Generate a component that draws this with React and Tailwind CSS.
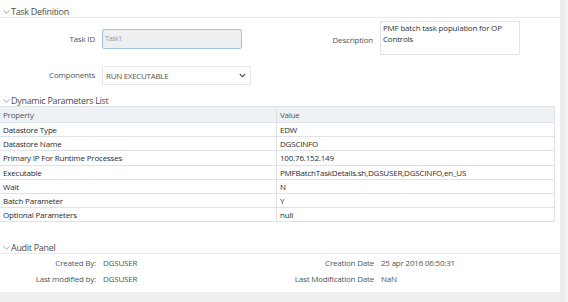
const font = { fontFamily: '"Open Sans", "Liberation Sans", sans-serif' };

function Chevron() {
  return (
    <svg width="7" height="5" viewBox="0 0 7 5" className="mr-[1px] shrink-0 translate-y-[1px]">
      <polyline points="0.5,0.8 3.5,3.8 6.5,0.8" fill="none" stroke="#8a8a8a" strokeWidth="0.8" />
    </svg>
  );
}

function SectionHeader({ title, line = true }) {
  return (
    <div className={`flex items-end h-[18px] pl-[3px] pb-[1px] ${line ? 'border-b border-[#e3eaef]' : ''}`}>
      <div className="flex items-center translate-y-[1.5px]">
        <Chevron />
        <span className="text-[9px] leading-[13px] tracking-[-0.3px] text-[#4d4d4d]">{title}</span>
      </div>
    </div>
  );
}

const rows = [
  ['Datastore Type', 'EDW'],
  ['Datastore Name', 'DGSCINFO'],
  ['Primary IP For Runtime Processes', '100.76.152.149'],
  ['Executable', 'PMFBatchTaskDetails.sh,DGSUSER,DGSCINFO,en_US'],
  ['Wait', 'N'],
  ['Batch Parameter', 'Y'],
  ['Optional Parameters', 'null'],
];

export default function App() {
  return (
    <div className="flex w-[568px] h-[302px] bg-white overflow-hidden" style={font}>
      <div className="w-[560px] flex flex-col">
        <div className="h-[292px] bg-white">
          <SectionHeader title="Task Definition" />

          <div className="flex text-[8px] tracking-[-0.2px]">
            <div className="w-[280px]">
              <div className="flex items-center mt-[11px]">
                <span className="w-[95px] text-right text-[#555]">Task ID</span>
                <div className="ml-[7px] w-[140px] h-[20px] rounded-[2px] border border-[#9ec3e6] bg-[#eeeff1] flex items-center px-[2px] text-[7px] tracking-[-0.4px] text-[#9a9a9a]">
                  Task1
                </div>
              </div>
              <div className="flex items-center mt-[17px]">
                <span className="w-[95px] text-right text-[#555] -translate-y-[1.5px]">Components</span>
                <div className="ml-[7px] w-[149px] h-[19px] border border-[#e6e6e6] bg-white flex items-center justify-between pl-[3px] pr-[4px] tracking-[-0.3px] text-[#555]">
                  <span>RUN EXECUTABLE</span>
                  <svg width="7" height="5" viewBox="0 0 7 5">
                    <polyline points="0.8,1 3.5,3.7 6.2,1" fill="none" stroke="#555" strokeWidth="1.1" />
                  </svg>
                </div>
              </div>
            </div>
            <div className="flex items-start mt-[3px]">
              <span className="w-[93px] text-right text-[#555] mt-[13px]">Description</span>
              <div className="ml-[7px] w-[140px] h-[34px] border border-[#e3e3e3] px-[2px] leading-[11px] text-[#333]">
                PMF batch task population for OP Controls
              </div>
            </div>
          </div>

          <div className="mt-[3px]">
            <SectionHeader title="Dynamic Parameters List" line={false} />
          </div>

          <div className="w-[555px] border border-l-0 border-[#dde3e8] text-[8px] tracking-[-0.2px] text-[#2b2b2b]">
            <div className="grid grid-cols-[277px_1fr] h-[15px] bg-[#eef2f5] text-[#555]">
              <div className="pl-[3px] leading-[15px] border-r border-[#dde3e8]">Property</div>
              <div className="pl-[3px] leading-[15px]">Value</div>
            </div>
            {rows.map(([k, v]) => (
              <div key={k} className="grid grid-cols-[277px_1fr] h-[14.2px] border-t border-[#dde3e8]">
                <div className="pl-[3px] leading-[13px] border-r border-[#dde3e8]">{k}</div>
                <div className="pl-[3px] leading-[13px]">{v}</div>
              </div>
            ))}
          </div>

          <div className="mt-[14px]">
            <SectionHeader title="Audit Panel" />
          </div>

          <div className="flex text-[8px] tracking-[-0.2px] text-[#555]">
            <div className="w-[280px]">
              <div className="flex mt-[3px] leading-[12px]">
                <span className="w-[96px] text-right">Created By:</span>
                <span className="ml-[7px]">DGSUSER</span>
              </div>
              <div className="flex mt-[4px] leading-[12px]">
                <span className="w-[96px] text-right">Last modified by:</span>
                <span className="ml-[7px]">DGSUSER</span>
              </div>
            </div>
            <div>
              <div className="flex mt-[3px] leading-[12px]">
                <span className="w-[94px] text-right">Creation Date</span>
                <span className="ml-[7px]">25 apr 2016 06:50:31</span>
              </div>
              <div className="flex mt-[4px] leading-[12px]">
                <span className="w-[94px] text-right">Last Modification Date</span>
                <span className="ml-[7px]">NaN</span>
              </div>
            </div>
          </div>
        </div>
        <div className="h-[10px] bg-[#efefef]" />
      </div>
      <div className="w-[8px] flex">
        <div className="w-[5px] bg-[#ececec]" />
        <div className="w-[3px] bg-[#f4f4f4]" />
      </div>
    </div>
  );
}
